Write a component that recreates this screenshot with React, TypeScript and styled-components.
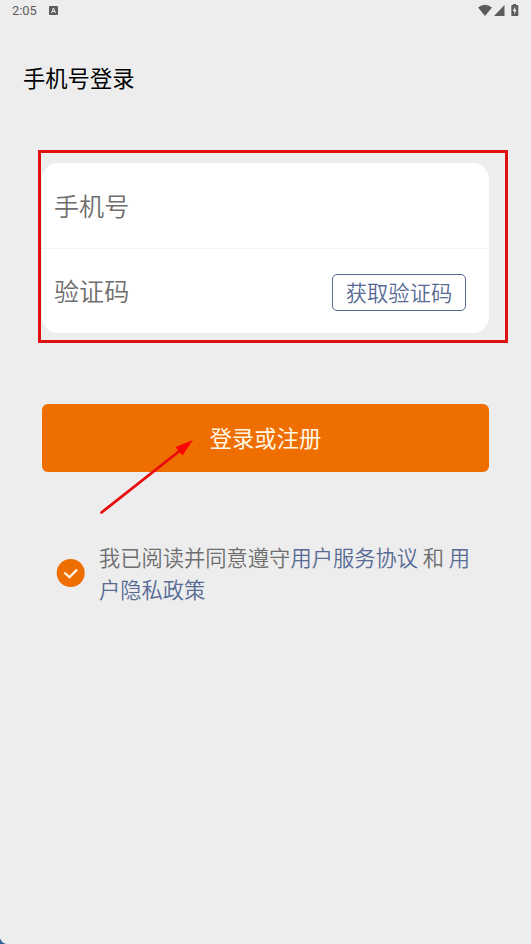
import React from 'react';
import styled, { createGlobalStyle } from 'styled-components';

const GlobalStyle = createGlobalStyle`
  * { box-sizing: border-box; }
  body {
    margin: 0;
    background: #ededed;
    font-family: 'Noto Sans CJK SC', sans-serif;
  }
  button { font-family: inherit; padding: 0; }
`;

const Screen = styled.main`
  position: relative;
  width: 531px;
  height: 944px;
  overflow: hidden;
  background: #ededed;
`;

const StatusBar = styled.header`
  display: flex;
  align-items: center;
  height: 22px;
  padding: 0 12px;
  color: #5c5c5c;
`;

const Clock = styled.span`
  width: 37px;
  font: 400 12.9px/22px Roboto, sans-serif;
`;

const NoticeIcon = styled.svg`
  margin-top: -1px;
`;

const StatusIcons = styled.div`
  display: flex;
  margin-left: auto;
`;

const Title = styled.h1`
  margin: 38px 0 0 23px;
  font-size: 22.3px;
  line-height: 34px;
  font-weight: 400;
  color: #000;
`;

const Form = styled.form`
  position: relative;
  margin: 69px 42px 0;
  height: 170px;
  border-radius: 16px;
  background: #fff;
`;

const Highlight = styled.div`
  position: absolute;
  left: -4px;
  top: -13px;
  width: 470px;
  height: 193px;
  border: 3px solid #e01010;
  pointer-events: none;
`;

const Field = styled.div<{ $divided?: boolean }>`
  display: flex;
  align-items: center;
  justify-content: space-between;
  height: ${p => (p.$divided ? 86 : 84)}px;
  padding: 0 23px 0 12px;
  border-bottom: ${p => (p.$divided ? '1px solid #f3f3f3' : '0')};
`;

const Placeholder = styled.span`
  padding-bottom: 2px;
  font-size: 25.1px;
  line-height: 36px;
  font-weight: 350;
  color: #6e6e6e;
`;

const CodeButton = styled.button`
  width: 134px;
  height: 37px;
  margin-top: 2px;
  border: 1px solid #576b95;
  border-radius: 5px;
  background: transparent;
  color: #576b95;
  font-size: 21.3px;
  line-height: 33px;
  font-weight: 350;
  padding-bottom: 2px;
`;

const LoginButton = styled.button`
  display: block;
  width: 447px;
  height: 68px;
  margin: 71px 0 0 42px;
  padding-bottom: 2px;
  border: 0;
  border-radius: 6px;
  background: #ef6e00;
  color: #fff6e6;
  font-size: 22.3px;
  line-height: 66px;
`;

const Agreement = styled.div`
  display: flex;
  align-items: center;
  margin: 69px 56px 0;
`;

const Terms = styled.p`
  width: 376px;
  margin: 0 0 0 14px;
  font-size: 21.27px;
  line-height: 32px;
  font-weight: 350;
  color: #6e6e6e;
  word-break: break-all;
`;

const Link = styled.a`
  color: #576b95;
`;

const Arrow = styled.svg`
  position: absolute;
  left: 96px;
  top: 434px;
`;

const Corner = styled.svg`
  position: absolute;
  left: 0;
  bottom: 0;
`;

export default function App() {
  return (
    <Screen>
      <GlobalStyle />
      <StatusBar>
        <Clock>2:05</Clock>
        <NoticeIcon width="9" height="9" viewBox="0 0 9 9">
          <rect width="9" height="9" rx="1" fill="#5c5c5c" />
          <path d="M2.5 7 4.5 2 6.5 7M3.2 5.4h2.6" fill="none" stroke="#eee" />
        </NoticeIcon>
        <StatusIcons>
          <svg width="41" height="14" viewBox="478 4 41 14" fill="#5c5c5c">
            <path d="M478 7.6Q485 1.8 492 7.6L485 16Z" />
            <path d="M504.500 5V16H494Z" />
            <path d="M513 4h3v1h1.500q.8 0 .8.800v9.400q0 .8-.8.800h-5.400q-.8 0-.8-.8v-9.400q0-.8.8-.8h.9Z" />
            <path d="M515.200 6.500 512.800 11h1.500v3.500l2.300-4.700h-1.400Z" fill="#eee" />
          </svg>
        </StatusIcons>
      </StatusBar>
      <Title>手机号登录</Title>
      <Form>
        <Field $divided>
          <Placeholder>手机号</Placeholder>
        </Field>
        <Field>
          <Placeholder>验证码</Placeholder>
          <CodeButton type="button">获取验证码</CodeButton>
        </Field>
        <Highlight />
      </Form>
      <LoginButton type="button">登录或注册</LoginButton>
      <Agreement>
        <svg width="29" height="29" viewBox="0 0 29 29">
          <circle cx="14.700" cy="14" r="14" fill="#ef6e00" />
          <path d="m8.300 13.500 5.200 4.700 7.500-7.600" fill="none" stroke="#fff3df" strokeWidth="2.300" />
        </svg>
        <Terms>
          我已阅读并同意遵守<Link>用户服务协议</Link> 和 <Link>用户隐私政策</Link>
        </Terms>
      </Agreement>
      <Arrow width="104" height="84" viewBox="96 434 104 84">
        <path d="M101.500 512.500 182 449" stroke="#e80c0c" strokeWidth="2.800" strokeLinecap="round" />
        <path d="M193 440 175.500 447 182.500 455.500Z" fill="#fa0505" />
      </Arrow>
      <Corner width="7" height="6" viewBox="0 0 7 6">
        <path d="M0 0Q1 4.500 6 6H0Z" fill="#2d5f9c" />
      </Corner>
    </Screen>
  );
}
